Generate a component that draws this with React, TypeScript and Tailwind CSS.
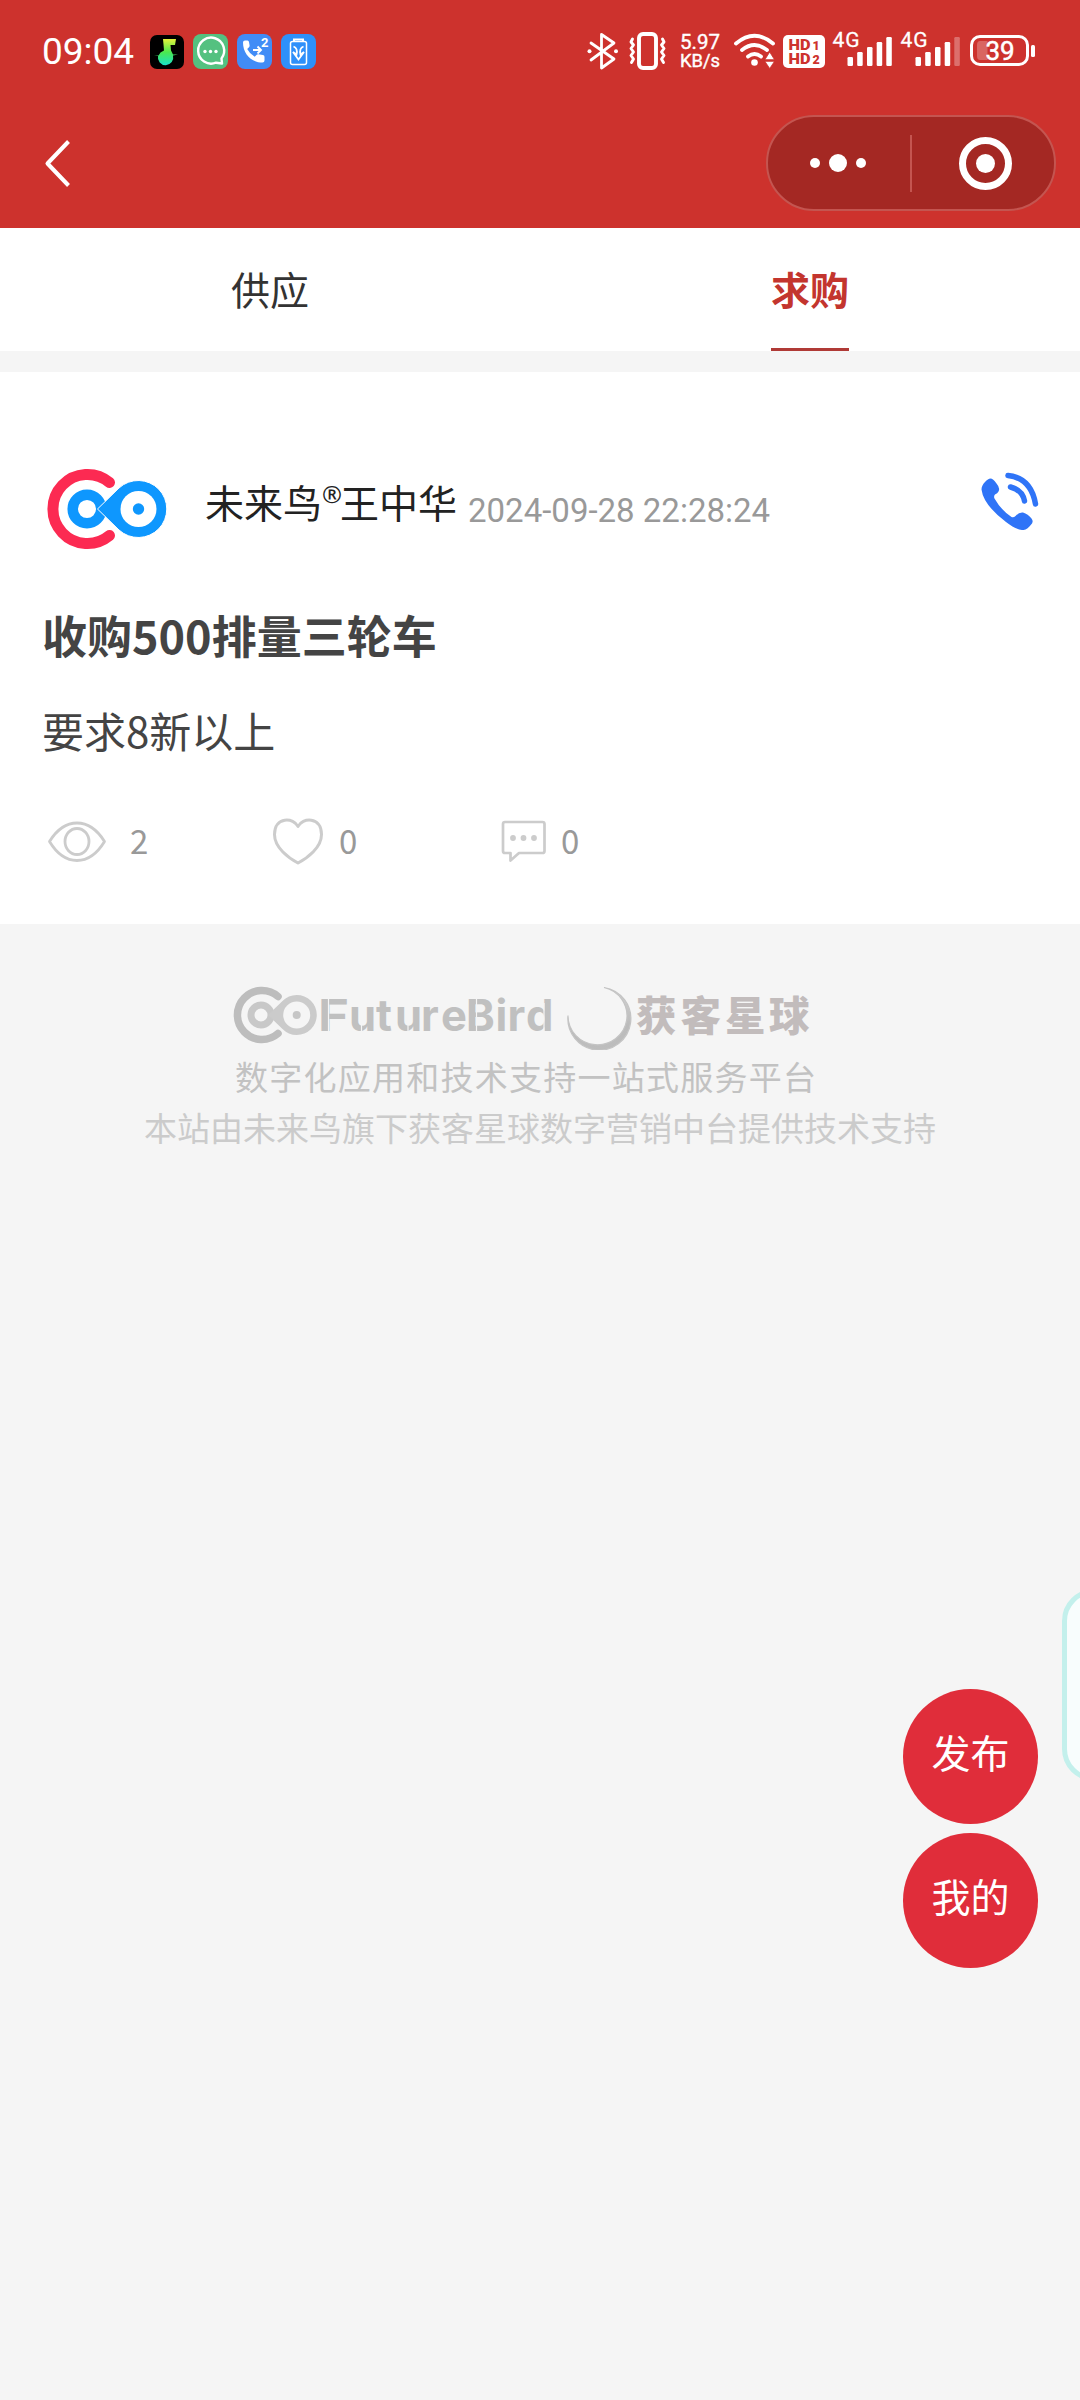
import React from "react";

const CJK = "font-['Noto_Sans_CJK_SC',sans-serif]";

function MusicAppIcon() {
  return (
    <svg width="34" height="35" viewBox="0 0 34 35">
      <defs>
        <linearGradient id="note" x1="0" y1="0" x2="0" y2="1">
          <stop offset="0" stopColor="#e4f23a" />
          <stop offset="0.5" stopColor="#4be84e" />
          <stop offset="1" stopColor="#19e0c8" />
        </linearGradient>
      </defs>
      <rect y="1" width="34" height="34" rx="7" fill="#000" />
      <path
        d="M13 5h13l-1 6h-4.500l.5 5.500 2 4h5l-5 1a7.700 7.700 0 1 1-15 .5l-4-.5h4.500l2-3 3.500-2-.5-6z"
        fill="url(#note)"
      />
    </svg>
  );
}

function ChatAppIcon() {
  return (
    <svg width="35" height="35" viewBox="0 0 35 35">
      <rect width="35" height="35" rx="8" fill="#54c180" />
      <path d="M28.500 24.500a13 13 0 1 0-5.500 4.200l6 .8z" fill="none" stroke="#fff" strokeWidth="2.400" strokeLinejoin="round" />
      <circle cx="12" cy="17.500" r="1.700" fill="#fff" />
      <circle cx="17.500" cy="17.500" r="1.700" fill="#fff" />
      <circle cx="23" cy="17.500" r="1.700" fill="#fff" />
    </svg>
  );
}

function CallForwardIcon() {
  return (
    <svg width="35" height="35" viewBox="0 0 35 35">
      <rect width="35" height="35" rx="8" fill="#418cf6" />
      <path
        d="M6 8.500q0-2 2-2h2.500q1.300 0 1.500 1.500l.6 3.500q.1 1-.6 1.700l-1.800 1.900q2.500 5 7.500 7.600l2-1.900q.7-.7 1.700-.5l4.500.8q1.600.3 1.600 1.700v3.700q0 2-2 2C14.500 28.500 6 20 6 8.500z"
        fill="#fff"
      />
      <path d="M16 16h7.500M20.500 12.500l3.500 3.500-3.500 3.500" fill="none" stroke="#fff" strokeWidth="1.900" />
      <text x="24" y="13" fontSize="13" fontWeight="700" fontFamily="Roboto, sans-serif" fill="#fff">2</text>
    </svg>
  );
}

function BatterySaverIcon() {
  return (
    <svg width="35" height="35" viewBox="0 0 35 35" fill="none" stroke="#fff" strokeWidth="1.500">
      <rect width="35" height="35" rx="8" fill="#2e90fa" stroke="none" />
      <rect x="9.500" y="7.500" width="16" height="23" rx="2" />
      <path d="M13 7V5.500h9V7" strokeWidth="2" />
      <path d="M12.500 12.500q4.500 1.500 3 8l-3.500-2.500 5.500 7.500 5.500-7.500-3.500 2.500q-1.500-6.500 3-8" strokeWidth="1.800" />
    </svg>
  );
}

function BluetoothIcon() {
  return (
    <svg width="32" height="38" viewBox="0 0 32 38" fill="none" stroke="#fff" strokeWidth="2.800" strokeLinejoin="round" strokeLinecap="round">
      <path d="M4 11l23 16-12.500 9V2.500L27 11 4 28" />
      <circle cx="2.500" cy="19.300" r="2" fill="#fff" stroke="none" />
      <circle cx="29" cy="19.300" r="2" fill="#fff" stroke="none" />
    </svg>
  );
}

function VibrateIcon() {
  return (
    <svg className="ml-[9px]" width="40" height="38" viewBox="0 0 40 38" fill="none" stroke="#fff" strokeWidth="2.900" strokeLinejoin="round" strokeLinecap="round">
      <rect x="11" y="2" width="17" height="34" rx="4" strokeWidth="3.900" />
      <path d="M4.500 7L3 10l2.500 3L3 16.500 5.500 20 3 23.500 5.500 27l-2 3.500M34.500 7l1.500 3-2.500 3 2.500 3.500-2.500 3.500 2.500 3.500-2.500 3.500 2 3.500" />
    </svg>
  );
}

function WifiIcon() {
  return (
    <svg className="ml-[13px]" width="44" height="36" viewBox="0 0 44 36" fill="none" stroke="#fff" strokeWidth="3.800" strokeLinecap="round">
      <path d="M3 10.500Q21.500-5 40 10.500M9 17q12.500-10 25 0M15 23.500q6.500-5 13 0" />
      <circle cx="21.500" cy="29.500" r="3.300" fill="#fff" stroke="none" />
      <path d="M32 26.500l4.700-7.500 4.700 7.500zM32 28.500l4.700 7 4.700-7z" fill="#fff" stroke="#cd322d" strokeWidth=".8" />
    </svg>
  );
}

function SignalIcon({ weak = false }: { weak?: boolean }) {
  return (
    <svg width="62" height="50" viewBox="0 -6 62 50" fill="#fff">
      <text x="0.500" y="15" fontSize="21" fontFamily="Roboto, sans-serif" textLength="27" stroke="#fff" strokeWidth=".3">4G</text>
      <rect x="15.500" y="25" width="5.500" height="9" rx="1.200" />
      <rect x="25.200" y="20" width="5.500" height="14" rx="1.200" />
      <rect x="35" y="15" width="5.500" height="19" rx="1.200" />
      <rect x="44.700" y="10" width="5.500" height="24" rx="1.200" />
      <rect x="54.300" y="5" width="5.500" height="29" rx="1.200" opacity={weak ? 0.3 : 1} />
    </svg>
  );
}

function StatusBar() {
  return (
    <div className="flex h-[102px] items-center justify-between pl-[42px] pr-[44px] text-white">
      <div className="flex items-center">
        <span className="w-[108px] font-['Roboto'] text-[37px] leading-none">09:04</span>
        <div className="flex items-center gap-[9px]">
          <MusicAppIcon />
          <ChatAppIcon />
          <CallForwardIcon />
          <BatterySaverIcon />
        </div>
      </div>
      <div className="flex items-center">
        <BluetoothIcon />
        <VibrateIcon />
        <svg className="ml-[12px]" width="40" height="44" viewBox="0 -3 40 44" fill="#fff" stroke="#fff" strokeWidth=".4" fontFamily="Roboto, sans-serif">
          <text x="0" y="17" fontSize="20.500" textLength="40">5.97</text>
          <text x="0" y="34.500" fontSize="18.500" textLength="40" lengthAdjust="spacingAndGlyphs">KB/s</text>
        </svg>
        <WifiIcon />
        <svg className="ml-[6px]" width="42" height="33" viewBox="0 0 42 33" fontFamily="Roboto, sans-serif" fontWeight="900">
          <rect width="42" height="33" rx="5" fill="#fff" />
          <g fill="#cd322d">
            <text x="5.500" y="14.800" fontSize="14.500" textLength="22" lengthAdjust="spacingAndGlyphs">HD</text>
            <text x="29.500" y="14.800" fontSize="12.500">1</text>
            <text x="5.500" y="29" fontSize="14.500" textLength="22" lengthAdjust="spacingAndGlyphs">HD</text>
            <text x="29.500" y="29" fontSize="12.500">2</text>
          </g>
        </svg>
        <div className="ml-[7px] flex gap-[6px]">
          <SignalIcon />
          <SignalIcon weak />
        </div>
        <svg className="ml-[8px]" width="66" height="32" viewBox="0 0 66 32">
          <rect x="1.500" y="1.500" width="56" height="28" rx="8.500" fill="none" stroke="#fff" strokeWidth="3" />
          <path d="M10 6h7.500v19H10q-3 0-3-4V10q0-4 3-4z" fill="#fff" opacity=".25" />
          <text x="15.500" y="25" fontSize="26" fontFamily="Roboto, sans-serif" fill="#fff" stroke="#fff" strokeWidth=".5">39</text>
          <rect x="61" y="10" width="4" height="12" rx="1.500" fill="#fff" />
        </svg>
      </div>
    </div>
  );
}

function NavBar() {
  return (
    <div className="flex h-[126px] items-start justify-between pl-[43px] pr-[24px]">
      <svg className="mt-[38px]" width="28" height="48" viewBox="0 0 28 48" fill="none" stroke="#fff" strokeWidth="4">
        <path d="M25.500 1.500L4.500 23.500 25.500 45.500" strokeLinejoin="round" />
      </svg>
      <div className="mt-[13px] flex h-[96px] w-[290px] items-center rounded-full border-2 border-[#c45550] bg-[#a42823]">
        <div className="flex w-[142px] items-center justify-center gap-[9px] pr-[2px]">
          <i className="size-[10px] rounded-full bg-white" />
          <i className="size-[18px] rounded-full bg-white" />
          <i className="size-[10px] rounded-full bg-white" />
        </div>
        <div className="h-[57px] w-[2px] bg-[#c45550]" />
        <div className="flex flex-1 items-center justify-center pl-[4px]">
          <div className="flex size-[53px] items-center justify-center rounded-full border-[7px] border-white">
            <i className="size-[19px] rounded-full bg-white" />
          </div>
        </div>
      </div>
    </div>
  );
}

function BrandMark() {
  return (
    <svg width="125" height="82" viewBox="-4.5 0 125 82">
      <path d="M62 14.500A34.500 34.500 0 1 0 62 67.500" fill="none" stroke="#fc2a52" strokeWidth="11" strokeLinecap="round" />
      <circle cx="39.500" cy="41" r="14.300" fill="none" stroke="#0e97fe" strokeWidth="10.500" />
      <path d="M50 41L71.500 20A28.500 28.500 0 1 1 71.500 62z" fill="#0e97fe" stroke="#fff" strokeWidth="1" strokeLinejoin="round" />
      <circle cx="91" cy="41" r="18" fill="#fff" />
      <circle cx="91" cy="41" r="5.700" fill="#0e97fe" />
    </svg>
  );
}

function PhoneIcon() {
  return (
    <svg width="58" height="58" viewBox="0 0 58 58">
      <path
        d="M4 10Q7 6.500 9.500 6.500T15.500 11.500Q19.500 16 17.500 19.500 16.500 21.500 14 22.500 12.500 24 13.500 26.500 20 38 30.500 45 32.500 46 34.500 44 38 40 42 40.500 47 42 50.500 46.500 52.500 49 51 51.500 46.500 57.500 42.500 58 36 58.500 25 50 2.500 33 .5 17.500.500 13.500 4 10z"
        fill="#2f74f7"
      />
      <path d="M27 3.500Q50 6 54.500 32M29.500 15Q41.500 18 43.500 29" fill="none" stroke="#2f74f7" strokeWidth="5.500" strokeLinecap="round" />
    </svg>
  );
}

function Stats() {
  return (
    <div className={`flex h-[48px] items-center text-[33px] leading-[48px] text-[#999] ${CJK}`}>
      <div className="flex w-[225px] items-center">
        <svg className="ml-[4px]" width="60" height="48" viewBox="0 0 60 48" fill="none" stroke="#ccc" strokeWidth="2.800" strokeLinejoin="round">
          <path d="M2.500 24.500Q14 6 30 6T57.500 24.500Q46 43.500 30 43.500T2.500 24.500z" />
          <ellipse cx="30" cy="24.500" rx="12" ry="13" />
        </svg>
        <span className="-mt-[3px] ml-[23px]">2</span>
      </div>
      <div className="flex w-[232px] items-center">
        <svg className="ml-[4px]" width="52" height="48" viewBox="0 0 52 48" fill="none" stroke="#ccc" strokeWidth="3" strokeLinejoin="round">
          <path d="M26 9.500C22 .5 2.500-1 2.500 17.500c0 13 14 23.500 23.500 28.500 9.500-5 23.500-15.500 23.500-28.500C49.500-1 30 .5 26 9.500z" />
        </svg>
        <span className="-mt-[3px] ml-[15px]">0</span>
      </div>
      <div className="flex items-center">
        <svg className="ml-[1px]" width="45" height="48" viewBox="0 0 45 48" fill="none" stroke="#ccc" strokeWidth="2.700" strokeLinejoin="round">
          <path d="M4 5h37.500q2 0 2 2v27q0 2-2 2H18l-8.500 7.500V36H4q-2 0-2-2V7q0-2 2-2z" />
          <g fill="#ccc" stroke="none">
            <circle cx="12" cy="21" r="2.900" />
            <circle cx="22.500" cy="21" r="2.900" />
            <circle cx="33" cy="21" r="2.900" />
          </g>
        </svg>
        <span className="-mt-[3px] ml-[15px]">0</span>
      </div>
    </div>
  );
}

function Post() {
  return (
    <article className={`h-[552px] bg-white px-[43px] pt-[96px] ${CJK}`}>
      <div className="flex h-[82px] items-start">
        <BrandMark />
        <span className="ml-[37px] mt-[8px] flex text-[39px] leading-[50px] text-[#222]">
          未来鸟
          <span className="w-[18px] text-center font-['Noto_Sans'] text-[24px] leading-[35px]">®</span>
          王中华
        </span>
        <time className="ml-[11px] mt-[22px] font-['Roboto'] text-[33px] leading-[42px] text-[#999]">2024-09-28 22:28:24</time>
        <div className="ml-auto mt-[4px] -mr-[2px]">
          <PhoneIcon />
        </div>
      </div>
      <h2 className="mt-[55px] -ml-[1px] text-[45px] font-bold leading-[60px] text-[#444]">收购500排量三轮车</h2>
      <p className="mt-[35px] -ml-[1px] text-[42px] leading-[60px] text-[#444]">要求8新以上</p>
      <div className="mt-[57px]">
        <Stats />
      </div>
    </article>
  );
}

function FooterLogo() {
  return (
    <svg width="580" height="66" viewBox="232 984 580 66">
      <defs>
        <linearGradient id="moon" x1="0" y1="0" x2="0" y2="1">
          <stop offset="0" stopColor="#d4d4d4" />
          <stop offset=".6" stopColor="#bbb" />
          <stop offset="1" stopColor="#bdbdbd" />
        </linearGradient>
      </defs>
      <path d="M278 996.500A24.500 24.500 0 1 0 278 1033.500" fill="none" stroke="#bdbdbd" strokeWidth="7.500" strokeLinecap="round" />
      <circle cx="261" cy="1015" r="10" fill="none" stroke="#c8c8c8" strokeWidth="7" />
      <path d="M268 1015L282.500 1001A20 20 0 1 1 282.500 1029z" fill="#cbcbcb" />
      <circle cx="296.700" cy="1015" r="13.500" fill="#f5f5f5" />
      <circle cx="296.700" cy="1015" r="4" fill="#c6c6c6" />
      <g fontFamily="Inter, sans-serif" fontWeight="700" fontSize="43.500" fill="#c0c0c0">
        <text x="318" y="1031" textLength="31" lengthAdjust="spacingAndGlyphs">F</text>
        <text x="349 376 395 421 441 466 495.500 507.500 526" y="1031">utureBird</text>
      </g>
      <path d="M328.500 998v34M361.500 1020v12M408 1020v12M476.500 998v34M544 1003v30" stroke="#f5f5f5" strokeWidth="1.200" />
      <path d="M604 987.500A31.500 31.500 0 1 1 568 1015.500A29.500 29 0 1 0 604 987.500z" fill="url(#moon)" stroke="#c4c4c4" strokeWidth="1.200" />
      <text x="636 680.500 725 769" y="1030.500" fontFamily="'Noto Sans CJK SC', sans-serif" fontWeight="900" fontSize="40.500" fill="#c2bcbc">获客星球</text>
    </svg>
  );
}

export default function App() {
  return (
    <div className="relative h-[2400px] w-[1080px] overflow-hidden bg-[#f5f5f5]">
      <header className="bg-[#cd322d]">
        <StatusBar />
        <NavBar />
      </header>
      <nav className={`mb-[21px] flex h-[123px] bg-white text-[39px] leading-[120px] ${CJK}`}>
        <div className="flex flex-1 justify-center text-[#333]">供应</div>
        <div className="flex flex-1 justify-center font-bold text-[#c3352e]">
          <span className="h-[123px] border-b-[3px] border-[#b03a36]">求购</span>
        </div>
      </nav>
      <Post />
      <footer className={`flex flex-col items-center ${CJK}`}>
        <div className="mt-[60px] w-[616px]">
          <FooterLogo />
        </div>
        <p className="mt-[3px] w-[612px] pl-[1px] text-[33px] leading-[46px] tracking-[1.25px] text-[#c2c2c2]">数字化应用和技术支持一站式服务平台</p>
        <p className="mt-[5px] text-[33px] leading-[46px] text-[#cbcbcb]">本站由未来鸟旗下获客星球数字营销中台提供技术支持</p>
      </footer>
      <div className={`absolute left-[903px] top-[1689px] flex flex-col gap-[9px] text-[39px] text-white ${CJK}`}>
        <button className="size-[135px] rounded-full bg-[#e02d3a] pb-[10px] leading-none">发布</button>
        <button className="size-[135px] rounded-full bg-[#e02d3a] pb-[10px] leading-none">我的</button>
      </div>
      <div className="absolute -right-[40px] top-[1589px] h-[192px] w-[58px] rounded-l-[32px] border-[5px] border-[#c3f0ec] bg-[#f8fdfd]" />
    </div>
  );
}
